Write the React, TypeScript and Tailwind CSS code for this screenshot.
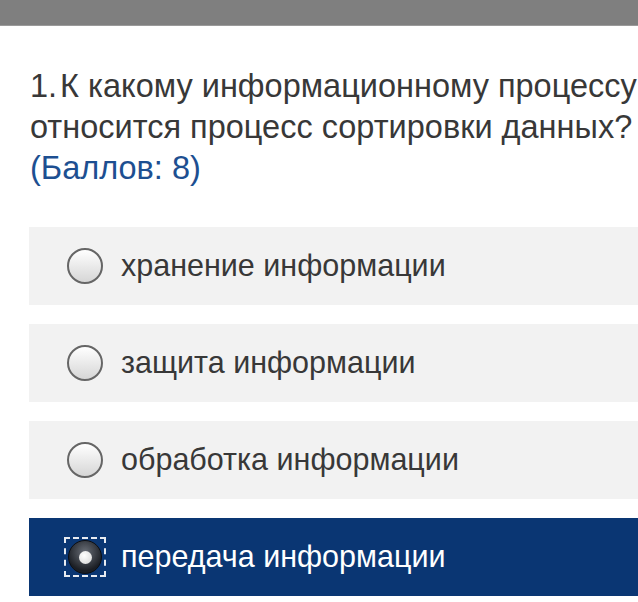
import React from "react";

const options = [
  { label: "хранение информации", selected: false },
  { label: "защита информации", selected: false },
  { label: "обработка информации", selected: false },
  { label: "передача информации", selected: true },
];

function Radio({ selected }: { selected: boolean }) {
  if (selected) {
    return (
      <div className="flex h-[40px] w-[42px] items-center justify-center border-2 border-dashed border-white/90">
        <div className="flex h-[34px] w-[34px] items-center justify-center rounded-full bg-[radial-gradient(circle_at_50%_35%,#6a6f78,#1b1e24_70%)] border border-[#0c0e12]">
          <div className="h-[13px] w-[13px] rounded-full bg-[radial-gradient(circle_at_40%_35%,#ffffff,#d4d4d4)]" />
        </div>
      </div>
    );
  }
  return (
    <div className="mx-[3px] h-[36px] w-[36px] rounded-full border-2 border-[#666666] bg-gradient-to-b from-[#ffffff] to-[#d6d6d6]" />
  );
}

export default function App() {
  return (
    <div
      className="h-[602px] w-[638px] overflow-hidden bg-white"
      style={{ fontFamily: '"Liberation Sans", Arial, sans-serif' }}
    >
      <div className="h-[26px] bg-[#7f7f7f] border-b border-[#9a9a9a]" />
      <div className="mt-[40px] whitespace-nowrap pl-[30px] text-[32.5px] leading-[41px] text-[#383838]">
        <div>
          1.<span className="ml-[3px]">К какому информационному процессу</span>
        </div>
        <div>относится процесс сортировки данных?</div>
        <div className="text-[#1d4f91]">(Баллов: 8)</div>
      </div>
      <div className="mt-[38px] flex flex-col gap-[19px] pl-[29px]">
        {options.map((o) => (
          <div
            key={o.label}
            className={
              "flex h-[78px] items-center gap-[15px] pl-[35px] " +
              (o.selected ? "bg-[#0a3673] text-white" : "bg-[#f2f2f2] text-[#383838]")
            }
          >
            <Radio selected={o.selected} />
            <span className="whitespace-nowrap text-[30.5px]">{o.label}</span>
          </div>
        ))}
      </div>
    </div>
  );
}
